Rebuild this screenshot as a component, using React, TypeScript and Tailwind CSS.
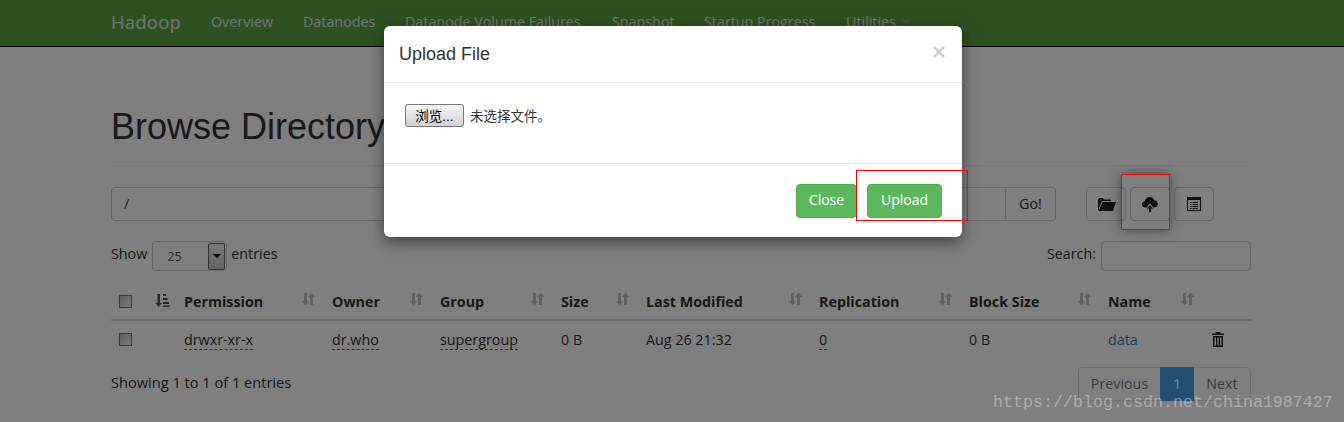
const sans = 'font-["Open_Sans","Noto_Sans_CJK_SC",sans-serif]';

const navItems = [
  { label: 'Overview', width: 'w-[92px]' },
  { label: 'Datanodes', width: 'w-[102px]' },
  { label: 'Datanode Volume Failures', width: 'w-[207px]' },
  { label: 'Snapshot', width: 'w-[92px]' },
  { label: 'Startup Progress', width: 'w-[142px]' },
];

const columns = [
  { label: 'Permission', width: 'w-[148px]' },
  { label: 'Owner', width: 'w-[108px]' },
  { label: 'Group', width: 'w-[121px]' },
  { label: 'Size', width: 'w-[85px]' },
  { label: 'Last Modified', width: 'w-[173px]' },
  { label: 'Replication', width: 'w-[150px]' },
  { label: 'Block Size', width: 'w-[139px]' },
  { label: 'Name', width: 'w-[103px]' },
];

function SortIcon() {
  return (
    <svg width="14" height="14" viewBox="0 0 14 14" fill="#c4c4c4" className="shrink-0">
      <path d="M3 1h3v8h2l-3.5 4.5L1 9h2z" />
      <path d="M9 13V5H7l3.500-4.500L14 5h-2v8z" />
    </svg>
  );
}

function SortActiveIcon() {
  return (
    <svg width="15" height="15" viewBox="0 0 15 15" fill="#555">
      <path d="M2.500 1h2.500v9h2l-3.300 4L0.500 10h2z" />
      <path d="M8 1h3v2H8zM8 5h4.500v2H8zM8 9h6v2H8zM8 12.500h7V14H8z" />
    </svg>
  );
}

function Checkbox() {
  return <span className="block w-[13px] h-[13px] border border-[#777] bg-[linear-gradient(135deg,#bdbdbd,#f0f0f0)]" />;
}

function FolderIcon() {
  return (
    <svg width="18" height="14" viewBox="0 0 18 14" fill="#222" className="ml-[2px]">
      <path d="M0 13V2.500L1 1h4l1 1.500h7V4H4L1 10.500V13z" />
      <path d="M4.500 5H18l-3.200 9H0.500z" />
    </svg>
  );
}

function CloudIcon() {
  return (
    <svg width="16" height="15" viewBox="0 0 16 15" fill="#222">
      <path d="M3.500 10.500C1.500 10.500 0 9.200 0 7.400 0 5.800 1.100 4.600 2.700 4.300 3.200 1.900 5.200 0 7.800 0c2.300 0 4.100 1.400 4.700 3.500 2 .1 3.500 1.700 3.500 3.600 0 1.900-1.500 3.400-3.500 3.400h-1.200L8 6.500l-3.300 4z" />
      <path d="M8 8l3 3.500H9V15H7v-3.500H5z" />
    </svg>
  );
}

function ListIcon() {
  return (
    <svg width="14" height="14" viewBox="0 0 14 14">
      <rect x="0.500" y="0.500" width="13" height="13" fill="none" stroke="#222" />
      <path d="M1 1h12v2H1z" fill="#222" />
      <path d="M3 5h1.500v1H3zM5.500 5H11v1H5.500zM3 7h1.500v1H3zM5.500 7H11v1H5.500zM3 9h1.500v1H3zM5.500 9H11v1H5.500zM3 11h1.500v1H3zM5.500 11H11v1H5.500z" fill="#222" />
    </svg>
  );
}

function TrashIcon() {
  return (
    <svg width="14" height="15" viewBox="0 0 14 15" fill="#222">
      <path d="M5 0h4l.5 1.500H13V3H1V1.500h3.500z" />
      <path d="M2 4h10v11H2zm1.500 1.500v8H5v-8zm2.800 0v8h1.400v-8zm2.800 0v8h1.400v-8z" fillRule="evenodd" />
    </svg>
  );
}

function ToolButton({ children }: { children: React.ReactNode }) {
  return (
    <button className="w-10 h-[34px] flex items-center justify-center bg-white border border-[#ccc] rounded">
      {children}
    </button>
  );
}

function DottedValue({ children }: { children: React.ReactNode }) {
  return <span className="border-b border-dashed border-[#0088cc]">{children}</span>;
}

export default function App() {
  return (
    <div className={`relative w-[1344px] h-[422px] overflow-hidden bg-white text-[14.3px] text-[#333] ${sans}`}>
      <nav className="h-[47px] bg-[#5fa33e] border-b border-[#000] pl-[111px] pb-[2px] flex items-center text-[#e8e8e8]">
        <span className="w-[100px] text-[18.5px] tracking-[0.2px]">Hadoop</span>
        {navItems.map((item) => (
          <a key={item.label} className={`${item.width} text-[14.3px]`}>{item.label}</a>
        ))}
        <a className="flex items-center gap-[6px] text-[14.3px]">
          Utilities
          <span className="w-0 h-0 border-x-[4px] border-x-transparent border-t-[4px] border-t-[#999]" />
        </a>
      </nav>

      <main className="w-[1140px] ml-[111px]">
        <h1 className='pt-[60px] h-[119px] border-b border-[#eee] text-[36px] leading-[40px] text-[#333] font-["Liberation_Sans",sans-serif]'>
          Browse Directory
        </h1>

        <div className="mt-[21px] flex">
          <div className="w-[945px] h-[34px] flex">
            <div className="flex-1 border border-[#ccc] rounded-l pl-3 pb-[1px] flex items-center text-[#555]">/</div>
            <button className="w-[50px] border border-l-0 border-[#ccc] rounded-r pb-[1px] text-[#333]">Go!</button>
          </div>
          <div className="ml-[30px] flex gap-1">
            <ToolButton><FolderIcon /></ToolButton>
            <ToolButton><CloudIcon /></ToolButton>
            <ToolButton><ListIcon /></ToolButton>
          </div>
        </div>

        <div className="mt-[20px] h-[30px] flex items-center justify-between">
          <div className="flex items-center">
            <span className="pb-[5px]">Show</span>
            <div className="ml-[5px] w-[75px] h-[30px] border border-[#ccc] rounded flex items-center justify-between pr-[1px]">
              <span className="pl-[14px] pt-[3px] text-[12.500px] text-[#555]">25</span>
              <span className="w-[17px] h-[27px] border border-[#666] rounded-[2px] bg-[linear-gradient(#f4f4f4,#c8c8c8)] flex items-center justify-center">
                <span className="w-0 h-0 border-x-[4px] border-x-transparent border-t-[4px] border-t-black" />
              </span>
            </div>
            <span className="ml-[4px] pb-[5px]">entries</span>
          </div>
          <div className="flex items-center gap-[5px]">
            <span className="pb-[5px]">Search:</span>
            <div className="w-[150px] h-[30px] border border-[#ccc] rounded" />
          </div>
        </div>

        <table className="mt-[13px] w-[1140px] table-fixed border-collapse">
          <colgroup>
            <col className="w-[36px]" />
            <col className="w-[29px]" />
            {columns.map((col) => (
              <col key={col.label} className={col.width} />
            ))}
            <col className="w-[48px]" />
          </colgroup>
          <thead>
            <tr className="h-[36px] border-b-2 border-[#ddd]">
              <th className="pl-2 align-middle"><Checkbox /></th>
              <th className="pl-[8px] pb-[3px] align-middle"><SortActiveIcon /></th>
              {columns.map((col) => (
                <th key={col.label} className="px-2 font-bold text-left align-middle">
                  <div className="flex items-center justify-between pr-px">
                    <span>{col.label}</span>
                    <span className="pb-[5px]"><SortIcon /></span>
                  </div>
                </th>
              ))}
              <th />
            </tr>
          </thead>
          <tbody>
            <tr className="h-[38px]">
              <td className="pl-2"><Checkbox /></td>
              <td />
              <td className="px-2"><DottedValue>drwxr-xr-x</DottedValue></td>
              <td className="px-2"><DottedValue>dr.who</DottedValue></td>
              <td className="px-2"><DottedValue>supergroup</DottedValue></td>
              <td className="px-2">0 B</td>
              <td className="px-2">Aug 26 21:32</td>
              <td className="px-2"><DottedValue>0</DottedValue></td>
              <td className="px-2">0 B</td>
              <td className="px-2 text-[#337ab7]">data</td>
              <td className="pl-2"><TrashIcon /></td>
            </tr>
          </tbody>
        </table>

        <div className="mt-[9px] flex items-start justify-between">
          <span className="pt-[5px] text-[14.600px]">Showing 1 to 1 of 1 entries</span>
          <div className="h-[34px] flex border border-[#ddd] rounded">
            <span className="w-[81px] flex items-center justify-center text-[#777]">Previous</span>
            <span className="w-[34px] -my-px flex items-center justify-center bg-[#489fe8] text-white">1</span>
            <span className="w-[56px] flex items-center justify-center text-[#777]">Next</span>
          </div>
        </div>
      </main>

      {/* backdrop */}
      <div className="absolute inset-0 bg-black/50" />

      {/* red mark around the upload tool button */}
      <div className="absolute left-[1121px] top-[174px] w-[49px] h-[56px] border border-[#f00] shadow-[0_0_12px_rgba(0,0,0,0.4)]" />

      <div className='absolute left-[384px] top-[26px] w-[578px] h-[211px] bg-white rounded-md shadow-[0_5px_15px_rgba(0,0,0,0.5)] flex flex-col font-["Liberation_Sans","Noto_Sans_CJK_SC",sans-serif]'>
        <div className="h-[57px] shrink-0 border-b border-[#e5e5e5] pl-[15px] pr-[16px] flex items-center justify-between">
          <span className="text-[18px] text-[#333]">Upload File</span>
          <span className="text-[24px] font-bold text-black/20 -mt-[5px]">×</span>
        </div>
        <div className="h-[81px] shrink-0 border-b border-[#e5e5e5] pl-[21px] pt-[21px] flex items-start gap-[6px] text-[13.500px] text-[#333]">
          <button className="w-[59px] h-[23px] pt-[2px] leading-[19px] border border-[#777] rounded-[3px] bg-[linear-gradient(#f6f6f6,#d0d0d0)] text-[13.500px] text-black">
            浏览...
          </button>
          <span className="leading-[25px]">未选择文件。</span>
        </div>
        <div className={`flex-1 pr-[20px] flex items-center justify-end gap-[10px] text-[14px] text-white ${sans}`}>
          <button className="w-[61px] h-[34px] pb-[2px] rounded bg-[#5cb85c] border border-[#4cae4c]">Close</button>
          <button className="w-[75px] h-[34px] pb-[2px] rounded bg-[#5cb85c] border border-[#4cae4c]">Upload</button>
        </div>
      </div>

      <div className="absolute left-[856px] top-[170px] w-[112px] h-[51px] border border-[#f00]" />

      <span className='absolute left-[993px] top-[391px] text-[16.670px] leading-[24px] text-white/35 font-["Liberation_Mono",monospace]'>
        https://blog.csdn.net/china1987427
      </span>
    </div>
  );
}
